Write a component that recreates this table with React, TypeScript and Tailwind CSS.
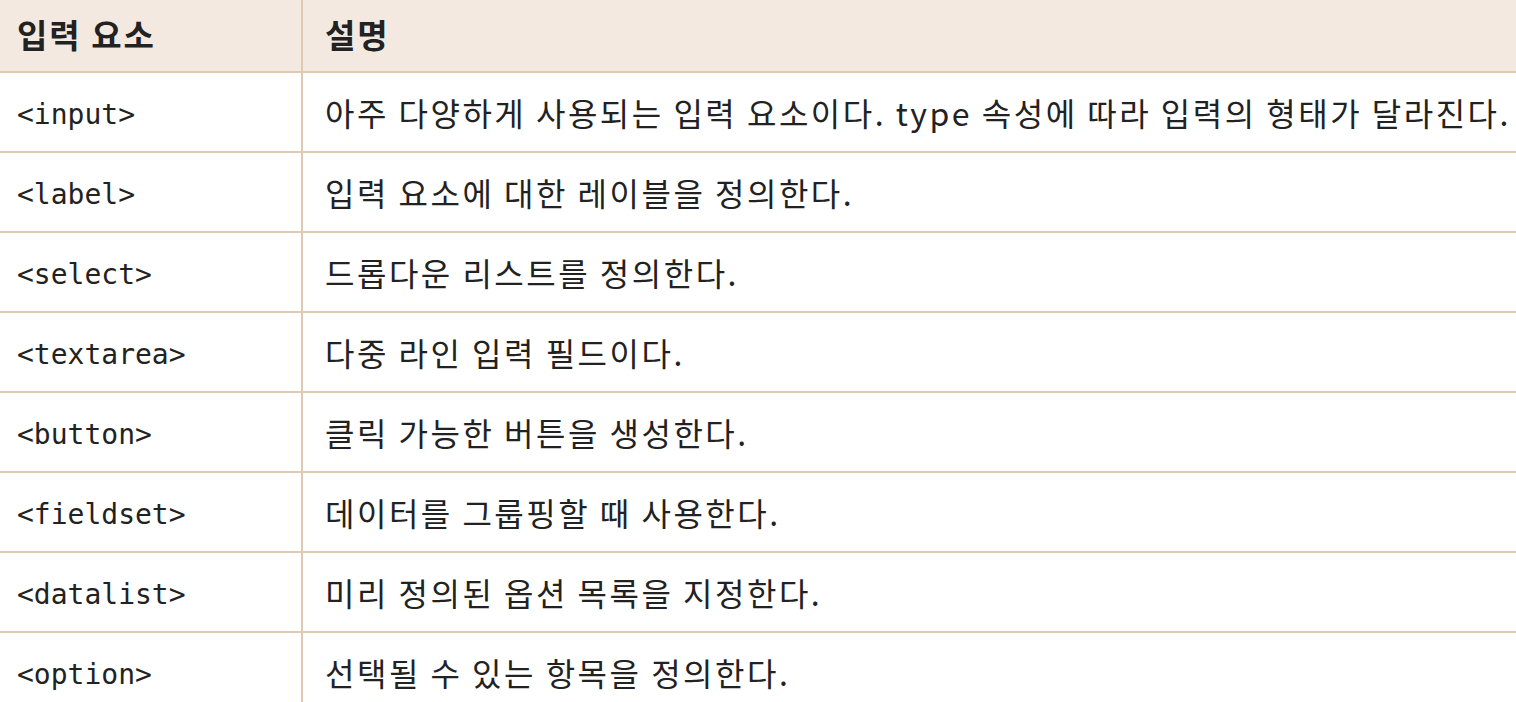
import React from "react";

const rows: [string, string][] = [
  ["<input>", "아주 다양하게 사용되는 입력 요소이다. type 속성에 따라 입력의 형태가 달라진다."],
  ["<label>", "입력 요소에 대한 레이블을 정의한다."],
  ["<select>", "드롭다운 리스트를 정의한다."],
  ["<textarea>", "다중 라인 입력 필드이다."],
  ["<button>", "클릭 가능한 버튼을 생성한다."],
  ["<fieldset>", "데이터를 그룹핑할 때 사용한다."],
  ["<datalist>", "미리 정의된 옵션 목록을 지정한다."],
  ["<option>", "선택될 수 있는 항목을 정의한다."],
];

export default function App() {
  return (
    <div className="w-[1516px] h-[702px] overflow-hidden bg-white text-[#222] font-['Noto_Sans_CJK_KR','Noto_Sans',sans-serif]">
      <div className="grid grid-cols-[303px_1fr] h-[73px] bg-[#f3e9e0] border-b-2 border-[#e0c8b3]">
        <div className="flex items-center pl-[17px] pb-[2px] border-r-2 border-[#e0c8b3] text-[33px] font-bold tracking-[2px]">
          입력 요소
        </div>
        <div className="flex items-center pl-[22px] pb-[2px] text-[33px] font-bold tracking-[2px]">
          설명
        </div>
      </div>
      {rows.map(([tag, desc]) => (
        <div key={tag} className="grid grid-cols-[303px_1fr] h-[80px] border-b-2 border-[#e0c8b3]">
          <div className="flex items-center pl-[17px] pt-[6px] border-r-2 border-[#e0c8b3] text-[28px] font-['DejaVu_Sans_Mono','Liberation_Mono',monospace]">
            {tag}
          </div>
          <div className="flex items-center pl-[22px] text-[32px] tracking-[2.5px] whitespace-nowrap">
            {desc}
          </div>
        </div>
      ))}
    </div>
  );
}
